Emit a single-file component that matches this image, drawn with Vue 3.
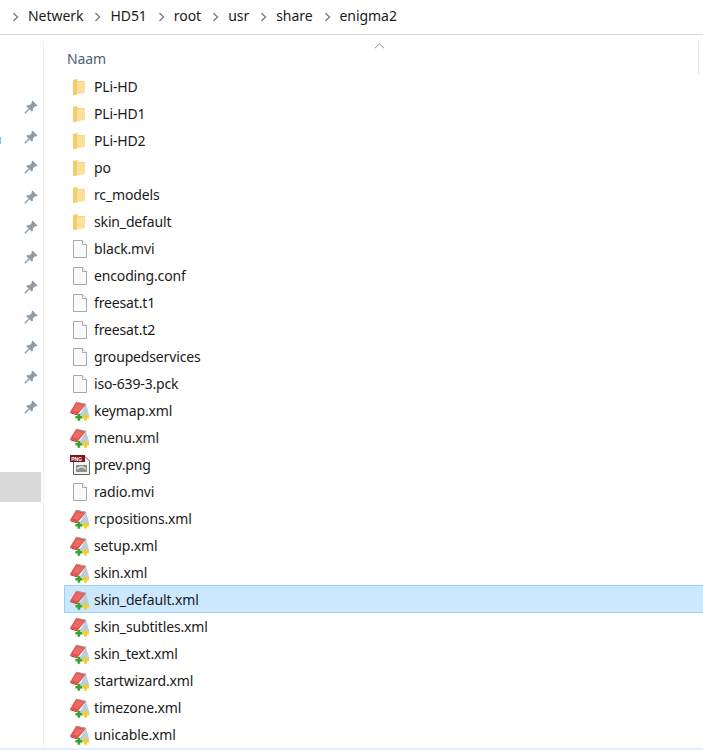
<script setup>
const crumbs = ['Netwerk', 'HD51', 'root', 'usr', 'share', 'enigma2']
const pins = Array.from({ length: 11 }, (_, i) => i)
const files = [
  ['PLi-HD', 'folder'], ['PLi-HD1', 'folder'], ['PLi-HD2', 'folder'], ['po', 'folder'],
  ['rc_models', 'folder'], ['skin_default', 'folder'], ['black.mvi', 'file'], ['encoding.conf', 'file'],
  ['freesat.t1', 'file'], ['freesat.t2', 'file'], ['groupedservices', 'file'], ['iso-639-3.pck', 'file'],
  ['keymap.xml', 'xml'], ['menu.xml', 'xml'], ['prev.png', 'png'], ['radio.mvi', 'file'],
  ['rcpositions.xml', 'xml'], ['setup.xml', 'xml'], ['skin.xml', 'xml'], ['skin_default.xml', 'xml'],
  ['skin_subtitles.xml', 'xml'], ['skin_text.xml', 'xml'], ['startwizard.xml', 'xml'],
  ['timezone.xml', 'xml'], ['unicable.xml', 'xml']
]
</script>

<template>
  <div class="window">
    <nav class="crumbs">
      <template v-for="c in crumbs" :key="c">
        <svg class="chev" width="7" height="10" viewBox="0 0 7 10"><path d="M1.5 1 5.5 5 1.5 9" fill="none" stroke="#7f7f7f" stroke-width="1.4"/></svg>
        <span class="crumb">{{ c }}</span>
      </template>
    </nav>
    <div class="body">
      <aside class="side">
        <span class="cyan"></span>
        <div v-for="p in pins" :key="p" class="pin-row">
          <svg width="14" height="14" viewBox="0 0 14 14">
            <path d="M8.5.5 13.5 5.5 12.3 6.4 11 6.2 8.8 8.4 8.9 10.8 7.7 11.6 2.4 6.3 3.2 5.1 5.6 5.2 7.8 3 7.6 1.7Z" fill="#8f9ba5"/>
            <path d="M5 9 .8 13.2" stroke="#8f9ba5" stroke-width="1.4" fill="none"/>
          </svg>
        </div>
        <div class="side-selected"></div>
      </aside>
      <main class="list">
        <header class="head">
          <span class="naam">Naam</span>
          <svg class="sort" width="11" height="6" viewBox="0 0 11 6"><path d="M1 5.2 5.5 .9 10 5.2" fill="none" stroke="#8c8c8c"/></svg>
          <span class="scroll-mark"></span>
        </header>
        <div v-for="[name, type] in files" :key="name" class="row" :class="{ selected: name === 'skin_default.xml' }">
          <span class="icon">
            <svg v-if="type === 'folder'" width="14" height="18" viewBox="1 0 14 18">
              <path d="M1 2 6 1V3H13V15L1 17Z" fill="#fbe097"/>
              <path d="M1 2 5 1.2V16.4L1 17Z" fill="#f2cd70"/>
              <path d="M5 3H13V4H5Z" fill="#f6d67f"/>
            </svg>
            <svg v-else-if="type === 'file'" width="16" height="20" viewBox="0 0 16 20">
              <path d="M1.5 1.5H10.5L14.5 5.5V18.5H1.5Z" fill="#fbfbfb" stroke="#a9a9a9"/>
              <path d="M10.5 1.5V5.5H14.5" fill="#fff" stroke="#a9a9a9"/>
            </svg>
            <svg v-else-if="type === 'xml'" width="20" height="20" viewBox="0 0 20 20">
              <path d="M16 3 19.5 15H9Z" fill="#b9cfe0"/>
              <path d="M6.3 .7 16.3 3 7.6 13.5 0 11Z" fill="#e2514d"/>
              <path d="M6.3 3 14 4.6 8 11 2.5 9.6Z" fill="#ea6a64"/>
              <path d="M6.3 .7 16.3 3 15.5 4 5.6 1.6Z" fill="#a9a5a5"/>
              <path d="M0 11 7.6 13.5 7.6 14.6 .5 12.3Z" fill="#a83533"/>
              <path d="M7.6 12.8H10.2V15H12.4V17.6H10.2V19.8H7.6V17.6H5.4V15H7.6Z" fill="#34a52e"/>
              <path d="M14.2 12.8H16.8V15H19V17.6H16.8V19.8H14.2V17.6H12V15H14.2Z" fill="#f3cc2e"/>
            </svg>
            <svg v-else width="22" height="22" viewBox="0 0 22 22">
              <path d="M4.5 2.5H16L20.5 7V20.5H4.5Z" fill="#f2f2f2" stroke="#666"/>
              <rect x="1" y="1" width="15" height="7" fill="#7a1520"/>
              <text x="2.2" y="6.6" class="png-tag">PNG</text>
              <rect x="7" y="11" width="11" height="7" fill="#8b9488"/>
              <path d="M8 15C11 12 14 12 17 15" stroke="#e4e8e2" stroke-width="1.5" fill="none"/>
            </svg>
          </span>
          <span class="name">{{ name }}</span>
        </div>
      </main>
    </div>
    <div class="foot"></div>
  </div>
</template>

<style>
html, body { margin: 0; background: #fff; }
</style>

<style scoped>
.window {
  width: 703px;
  height: 750px;
  overflow: hidden;
  display: flex;
  flex-direction: column;
  font-family: "Noto Sans", "Open Sans", sans-serif;
  font-size: 14px;
  letter-spacing: -0.15px;
  color: #1a1a1a;
  background: #fff;
}
.crumbs {
  flex: none;
  display: flex;
  align-items: center;
  height: 32px;
  padding: 0 0 2px 12px;
  letter-spacing: -0.05px;
  border-bottom: 1px solid #d9d9d9;
}
.chev { flex: none; margin-right: 9px; margin-top: 1px; }
.crumb { margin-right: 11px; line-height: 30px; }
.body { flex: 1; min-height: 0; display: flex; }
.side {
  position: relative;
  flex: none;
  width: 44px;
  margin-top: 6px;
  padding-top: 51px;
  box-sizing: border-box;
  border-right: 1px solid #f0f0f0;
}
.cyan {
  position: absolute;
  left: 0;
  top: 96px;
  width: 1px;
  height: 7px;
  background: #5fd0ff;
}
.pin-row {
  height: 30px;
  width: 41px;
  display: flex;
  align-items: center;
  justify-content: flex-end;
  padding-right: 3px;
  box-sizing: border-box;
}
.side-selected {
  width: 41px;
  height: 30px;
  margin-top: 50px;
  background: #d9d9d9;
}
.list { flex: 1; min-width: 0; padding-left: 20px; }
.head {
  position: relative;
  height: 37px;
  padding-left: 3px;
  display: flex;
  align-items: center;
}
.naam { color: #4c607a; margin-top: 9px; }
.sort { position: absolute; left: 310px; top: 8px; }
.scroll-mark {
  position: absolute;
  right: 4px;
  top: 7px;
  width: 1px;
  height: 32px;
  background: #e5e5e5;
}
.row {
  height: 27px;
  padding-top: 2px;
  box-sizing: border-box;
  display: flex;
  align-items: center;
  border: 1px solid transparent;
  border-right: 0;
}
.row.selected {
  height: 28px;
  padding-bottom: 1px;
  margin-bottom: -1px;
  background: #cce8ff;
  border-color: #99d1ff;
}
.icon {
  flex: none;
  width: 29px;
  height: 23px;
  display: flex;
  align-items: center;
  justify-content: center;
}
.name { line-height: 23px; white-space: nowrap; }
.png-tag {
  font-family: "Liberation Sans", sans-serif;
  font-size: 5px;
  font-weight: 700;
  letter-spacing: 0;
  fill: #fff;
}
.foot { flex: none; height: 2px; background: #e6eefb; }
</style>
